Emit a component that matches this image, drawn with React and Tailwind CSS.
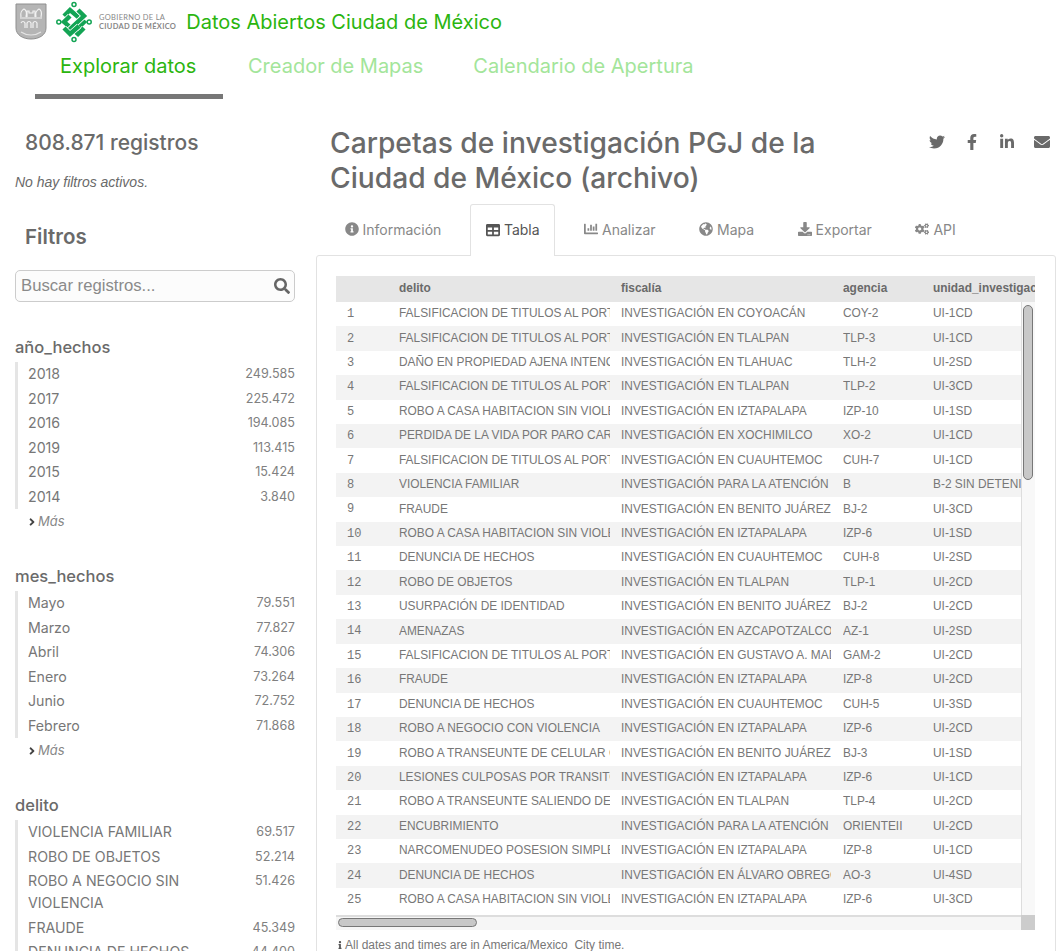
import { FaInfoCircle, FaTable, FaChartBar, FaGlobeAmericas, FaDownload, FaCogs, FaTwitter, FaFacebookF, FaLinkedinIn, FaEnvelope, FaSearch, FaAngleRight, FaInfo } from 'react-icons/fa';

const rows = [
  ['FALSIFICACION DE TITULOS AL PORTADOR', 'INVESTIGACIÓN EN COYOACÁN', 'COY-2', 'UI-1CD'],
  ['FALSIFICACION DE TITULOS AL PORTADOR', 'INVESTIGACIÓN EN TLALPAN', 'TLP-3', 'UI-1CD'],
  ['DAÑO EN PROPIEDAD AJENA INTENCIONAL', 'INVESTIGACIÓN EN TLAHUAC', 'TLH-2', 'UI-2SD'],
  ['FALSIFICACION DE TITULOS AL PORTADOR', 'INVESTIGACIÓN EN TLALPAN', 'TLP-2', 'UI-3CD'],
  ['ROBO A CASA HABITACION SIN VIOLENCIA', 'INVESTIGACIÓN EN IZTAPALAPA', 'IZP-10', 'UI-1SD'],
  ['PERDIDA DE LA VIDA POR PARO CARDIACO', 'INVESTIGACIÓN EN XOCHIMILCO', 'XO-2', 'UI-1CD'],
  ['FALSIFICACION DE TITULOS AL PORTADOR', 'INVESTIGACIÓN EN CUAUHTEMOC', 'CUH-7', 'UI-1CD'],
  ['VIOLENCIA FAMILIAR', 'INVESTIGACIÓN PARA LA ATENCIÓN DE', 'B', 'B-2 SIN DETENIDO'],
  ['FRAUDE', 'INVESTIGACIÓN EN BENITO JUÁREZ', 'BJ-2', 'UI-3CD'],
  ['ROBO A CASA HABITACION SIN VIOLENCIA', 'INVESTIGACIÓN EN IZTAPALAPA', 'IZP-6', 'UI-1SD'],
  ['DENUNCIA DE HECHOS', 'INVESTIGACIÓN EN CUAUHTEMOC', 'CUH-8', 'UI-2SD'],
  ['ROBO DE OBJETOS', 'INVESTIGACIÓN EN TLALPAN', 'TLP-1', 'UI-2CD'],
  ['USURPACIÓN DE IDENTIDAD', 'INVESTIGACIÓN EN BENITO JUÁREZ', 'BJ-2', 'UI-2CD'],
  ['AMENAZAS', 'INVESTIGACIÓN EN AZCAPOTZALCO', 'AZ-1', 'UI-2SD'],
  ['FALSIFICACION DE TITULOS AL PORTADOR', 'INVESTIGACIÓN EN GUSTAVO A. MADERO', 'GAM-2', 'UI-2CD'],
  ['FRAUDE', 'INVESTIGACIÓN EN IZTAPALAPA', 'IZP-8', 'UI-2CD'],
  ['DENUNCIA DE HECHOS', 'INVESTIGACIÓN EN CUAUHTEMOC', 'CUH-5', 'UI-3SD'],
  ['ROBO A NEGOCIO CON VIOLENCIA', 'INVESTIGACIÓN EN IZTAPALAPA', 'IZP-6', 'UI-2CD'],
  ['ROBO A TRANSEUNTE DE CELULAR CON', 'INVESTIGACIÓN EN BENITO JUÁREZ', 'BJ-3', 'UI-1SD'],
  ['LESIONES CULPOSAS POR TRANSITO', 'INVESTIGACIÓN EN IZTAPALAPA', 'IZP-6', 'UI-1CD'],
  ['ROBO A TRANSEUNTE SALIENDO DEL', 'INVESTIGACIÓN EN TLALPAN', 'TLP-4', 'UI-2CD'],
  ['ENCUBRIMIENTO', 'INVESTIGACIÓN PARA LA ATENCIÓN DE', 'ORIENTEII', 'UI-2CD'],
  ['NARCOMENUDEO POSESION SIMPLE', 'INVESTIGACIÓN EN IZTAPALAPA', 'IZP-8', 'UI-1CD'],
  ['DENUNCIA DE HECHOS', 'INVESTIGACIÓN EN ÁLVARO OBREGÓN', 'AO-3', 'UI-4SD'],
  ['ROBO A CASA HABITACION SIN VIOLENCIA', 'INVESTIGACIÓN EN IZTAPALAPA', 'IZP-6', 'UI-3CD'],
];

const facets = [
  { name: 'año_hechos', more: true, items: [['2018', '249.585'], ['2017', '225.472'], ['2016', '194.085'], ['2019', '113.415'], ['2015', '15.424'], ['2014', '3.840']] },
  { name: 'mes_hechos', more: true, items: [['Mayo', '79.551'], ['Marzo', '77.827'], ['Abril', '74.306'], ['Enero', '73.264'], ['Junio', '72.752'], ['Febrero', '71.868']] },
  { name: 'delito', items: [['VIOLENCIA FAMILIAR', '69.517'], ['ROBO DE OBJETOS', '52.214'], ['ROBO A NEGOCIO SIN VIOLENCIA', '51.426'], ['FRAUDE', '45.349'], ['DENUNCIA DE HECHOS', '44.400']] },
];

const tabs = [
  { label: 'Información', Icon: FaInfoCircle },
  { label: 'Tabla', Icon: FaTable, active: true },
  { label: 'Analizar', Icon: FaChartBar },
  { label: 'Mapa', Icon: FaGlobeAmericas },
  { label: 'Exportar', Icon: FaDownload },
  { label: 'API', Icon: FaCogs },
];

const Shield = () => (
  <svg width="32" height="37" viewBox="0 0 32 37">
    <path d="M1 1h30v24c0 7-7 11-15 11S1 32 1 25z" fill="#b5b5b5" stroke="#8f8f8f" />
    <path d="M6 14c-1-4 1-7 3-8 2 1 3 4 2 8M21 14c-1-4 1-7 3-8 2 1 3 4 2 8M12 14V8h2v2h4V8h2v6M5 15h22M6 20c1-2 3-2 4 0v5M12 25v-5c1-2 3-2 4 0v5M18 25v-5c1-2 3-2 4 0v5" fill="none" stroke="#f2f2f2" strokeWidth="1.2" />
    <path d="M6 29c6 4 14 4 20 0" fill="none" stroke="#e5e5e5" strokeWidth="1.2" />
  </svg>
);

const knotBands = [
  'M8 15L14 9L28 21L22 27',
  'M28 27L22 33L8 21L14 15',
  'M22 9L28 15L13 29L17 33',
  'M8 27L14 33L23 25',
];

const Knot = () => (
  <svg width="36" height="42" viewBox="0 0 36 42">
    {knotBands.map(d => (
      <g key={d} fill="none" strokeLinejoin="miter">
        <path d={d} stroke="#fff" strokeWidth="6" />
        <path d={d} stroke="#13a454" strokeWidth="4.4" />
      </g>
    ))}
    <g fill="none" stroke="#13a454" strokeWidth="1.5">
      <circle cx="18" cy="3.5" r="2" />
      <circle cx="18" cy="38.5" r="2" />
      <circle cx="2.8" cy="21" r="2" />
      <circle cx="33.2" cy="21" r="2" />
    </g>
  </svg>
);

const Facet = ({ facet }) => (
  <div className="mb-[32px]">
    <h3 className="text-[16.5px] leading-[20px] font-medium text-[#6a6a6a] mb-[5px]">{facet.name}</h3>
    <ul className="border-l-[3px] border-[#e5e5e5] pl-[10px]">
      {facet.items.map(([label, count]) => (
        <li key={label} className="flex justify-between items-start text-[14.2px] leading-[22px] py-[1.25px] text-[#777]">
          <span className="w-[190px]">{label}</span>
          <span className="text-[12.6px] text-[#808080]">{count}</span>
        </li>
      ))}
    </ul>
    {facet.more && (
      <div className="flex items-center pl-[11px] mt-[1px] h-[24px] text-[13px] italic text-[#888]">
        <FaAngleRight className="text-[12px] text-[#444]" /> Más
      </div>
    )}
  </div>
);

export default function App() {
  return (
    <div className="h-[951px] overflow-hidden bg-white font-['Inter',sans-serif] text-[#6a6a6a]">
      <header className="h-[43px] flex items-center pl-[15px]">
        <Shield />
        <div className="ml-[9px]"><Knot /></div>
        <div className="ml-[7px] font-['Lato',sans-serif] text-[7.5px] leading-[9px] tracking-[0.3px] text-[#888]">
          <div>GOBIERNO DE LA</div>
          <div className="font-bold">CIUDAD DE MÉXICO</div>
        </div>
        <span className="ml-[10px] text-[20px] text-[#2bb50f]">Datos Abiertos Ciudad de México</span>
      </header>

      <nav className="flex pl-[35px] h-[56px] text-[20px]">
        <a className="w-[188px] pl-[25px] pt-[8px] border-b-[5px] border-[#777] text-[#2bb50f]">Explorar datos</a>
        <a className="pl-[25px] pt-[8px] text-[#a3e59a]">Creador de Mapas</a>
        <a className="pl-[50px] pt-[8px] text-[#a3e59a]">Calendario de Apertura</a>
      </nav>

      <div className="flex">
        <aside className="w-[316px] shrink-0 pl-[15px] pr-[21px]">
          <h2 className="pl-[10px] mt-[30px] text-[21px] leading-[28px] font-medium">808.871 registros</h2>
          <p className="mt-[15px] text-[14px] leading-[20px] italic font-['Liberation_Sans',sans-serif]">No hay filtros activos.</p>
          <h2 className="pl-[10px] mt-[31px] text-[20.5px] leading-[28px] font-semibold">Filtros</h2>
          <div className="mt-[19px] h-[32px] flex items-center justify-between pl-[5px] pr-[4px] border border-[#ccc] rounded-[5px] bg-[#fcfcfc]">
            <span className="font-['Liberation_Sans',sans-serif] text-[16.7px] text-[#8a8a8a]">Buscar registros...</span>
            <FaSearch className="text-[16px] text-[#666]" />
          </div>
          <div className="mt-[35px]">
            {facets.map(f => <Facet key={f.name} facet={f} />)}
          </div>
        </aside>

        <main className="flex-1 min-w-0 pr-[2px]">
          <div className="flex justify-between pt-[27px] pl-[14px] pr-[6px]">
            <h1 className="w-[510px] text-[28.2px] leading-[35px] font-medium text-[#6a6a6a]">Carpetas de investigación PGJ de la Ciudad de México (archivo)</h1>
            <div className="flex gap-[19px] pt-[8px] text-[16px] text-[#6a6a6a]">
              <FaTwitter /><FaFacebookF /><FaLinkedinIn /><FaEnvelope />
            </div>
          </div>

          <div className="flex gap-[14.5px] mt-[8px] pl-[14px] -mb-px relative z-10 text-[14px]">
            {tabs.map(({ label, Icon, active }) => (
              <div key={label} className={`h-[52px] px-[14.5px] pb-[2px] flex items-center gap-[4px] rounded-t-[3px] ${active ? 'bg-white border border-b-0 border-[#e2e2e2] text-[#555]' : 'text-[#888]'}`}>
                <Icon className="text-[14px]" /> {label}
              </div>
            ))}
          </div>

          <section className="border border-[#e2e2e2] rounded-[3px] pt-[20px] pl-[19px] pr-[20px] h-[720px] font-['Liberation_Sans',sans-serif] text-[11.9px]">
            <div className="flex h-[26px] items-center bg-[#e6e6e6] font-bold text-[#6a6a6a]">
              <div className="w-[63px] shrink-0" />
              <div className="w-[222px] shrink-0">delito</div>
              <div className="w-[222px] shrink-0">fiscalía</div>
              <div className="w-[90px] shrink-0">agencia</div>
              <div className="flex-1 overflow-hidden whitespace-nowrap">unidad_investigacion</div>
            </div>
            <div className="flex h-[613px]">
              <div className="flex-1 min-w-0">
                {rows.map((r, i) => (
                  <div key={i} className={`flex h-[24.42px] items-center text-[#777] ${i % 2 ? 'bg-[#f3f3f3]' : 'bg-white'}`}>
                    <div className="w-[63px] shrink-0 pl-[11px] font-['Liberation_Mono',monospace] text-[12px]">{i + 1}</div>
                    <div className="w-[211px] mr-[11px] shrink-0 overflow-hidden whitespace-nowrap">{r[0]}</div>
                    <div className="w-[210px] mr-[12px] shrink-0 overflow-hidden whitespace-nowrap">{r[1]}</div>
                    <div className="w-[90px] shrink-0 overflow-hidden whitespace-nowrap">{r[2]}</div>
                    <div className="flex-1 overflow-hidden whitespace-nowrap">{r[3]}</div>
                  </div>
                ))}
              </div>
              <div className="w-[14px] shrink-0 border-l border-[#ddd] bg-[#f8f8f8] pt-[3px] pl-[1px]">
                <div className="w-[10px] h-[175px] rounded-[5px] border border-[#777] bg-[#c8c8c8]" />
              </div>
            </div>
            <div className="flex h-[15px] border-t-2 border-[#ddd]">
              <div className="flex-1 bg-[#f6f6f6] pl-[2px] pt-[1px]">
                <div className="w-[139px] h-[9px] rounded-[5px] border border-[#777] bg-[#c8c8c8]" />
              </div>
              <div className="w-[14px] -mt-[2px] h-[15px] bg-[#ccc]" />
            </div>
            <p className="mt-[8px] flex items-center gap-[1px] text-[12px] leading-[14px] text-[#777]"><FaInfo className="text-[8px] text-[#555]" /> All dates and times are in America/Mexico_City time.</p>
          </section>
        </main>
      </div>
    </div>
  );
}
